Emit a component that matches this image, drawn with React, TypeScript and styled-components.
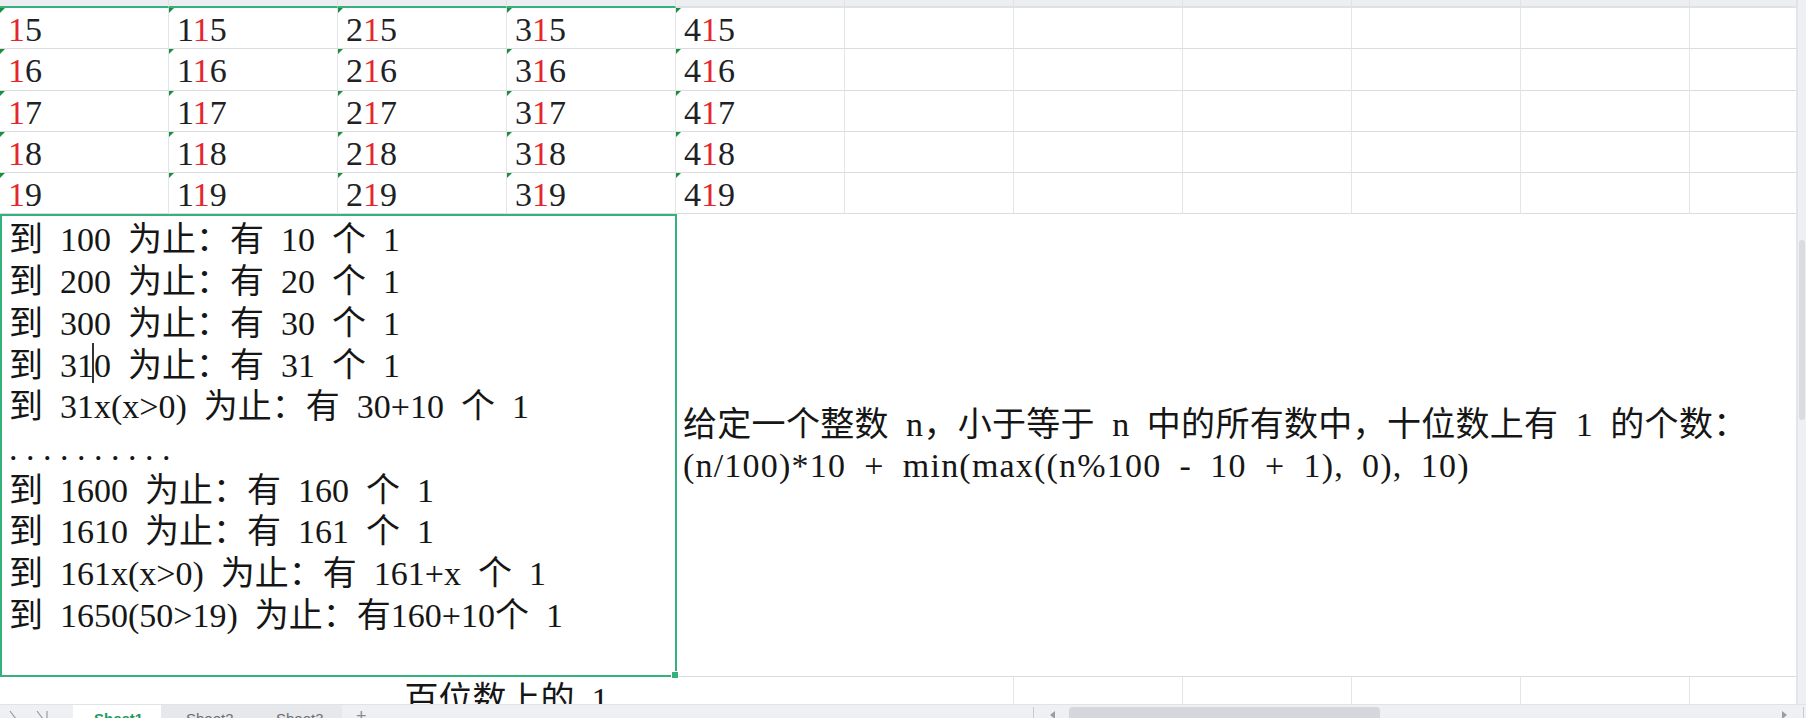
import React from 'react';
import styled, { createGlobalStyle } from 'styled-components';

const GREEN = '#35b27b';
const GRID_H = '#dadce0';
const GRID_V = '#e3e5e9';
const CELL_FONT = `"Liberation Serif", "Noto Sans CJK SC", serif`;

const GlobalStyle = createGlobalStyle`
  html, body {
    margin: 0;
    padding: 0;
    background: #fff;
    overflow: hidden;
  }
`;

const Window = styled.div`
  width: 1806px;
  height: 718px;
  display: flex;
  flex-direction: column;
  overflow: hidden;
  background: #fff;
`;

const Workspace = styled.div`
  display: flex;
  flex: 1;
  min-height: 0;
`;

const Sheet = styled.div`
  width: 1797px;
  display: flex;
  flex-direction: column;
  overflow: hidden;
`;

const ColumnGrid = styled.div<{ $height: string }>`
  display: grid;
  grid-template-columns: repeat(10, 169px) 1fr;
  height: ${(p) => p.$height};
  flex-shrink: 0;
`;

const HeaderCell = styled.div<{ $selected?: boolean }>`
  box-sizing: border-box;
  background: #eceef1;
  border-right: 1px solid #e0e2e6;
  border-bottom: 2px solid ${(p) => (p.$selected ? GREEN : '#dfe1e5')};
`;

const Cell = styled.div<{ $flag?: boolean }>`
  position: relative;
  box-sizing: border-box;
  border-right: 1px solid ${GRID_V};
  border-bottom: 1px solid ${GRID_H};
  padding: 3px 0 0 8px;
  font-family: ${CELL_FONT};
  font-size: 34px;
  line-height: 38px;
  color: #202124;
  white-space: nowrap;
  overflow: hidden;

  &::before {
    content: '';
    display: ${(p) => (p.$flag ? 'block' : 'none')};
    position: absolute;
    top: 0;
    left: 0;
    border-top: 5px solid #1b8f3e;
    border-right: 5px solid transparent;
  }
`;

const Hit = styled.span`
  color: #e5262d;
`;

const Block = styled.div`
  display: flex;
  height: 462.5px;
  flex-shrink: 0;
`;

const NoteCell = styled.div`
  position: relative;
  width: 677px;
  flex-shrink: 0;
  box-sizing: border-box;
  border: 2px solid ${GREEN};
  padding: 3px 0 0 7px;
  font-family: ${CELL_FONT};
  font-size: 34px;
  line-height: 41.7px;
  word-spacing: 0.25em;
  color: #161616;
  white-space: pre;
  z-index: 1;
`;

const Dots = styled.div`
  letter-spacing: 0.25em;
`;

const Handle = styled.span`
  position: absolute;
  right: -4px;
  bottom: -4px;
  width: 6px;
  height: 6px;
  background: ${GREEN};
  border: 1px solid #fff;
`;

const Caret = styled.span`
  position: absolute;
  left: 90px;
  top: 127px;
  width: 2px;
  height: 40px;
  background: #333;
`;

const FormulaCell = styled.div`
  flex: 1;
  box-sizing: border-box;
  display: flex;
  flex-direction: column;
  justify-content: center;
  padding-left: 6px;
  border-right: 1px solid ${GRID_V};
  border-bottom: 1px solid ${GRID_H};
  font-family: ${CELL_FONT};
  font-size: 34px;
  line-height: 41.7px;
  word-spacing: 0.25em;
  color: #161616;
  white-space: pre;
`;

const FormulaLine = styled.div<{ $track?: number }>`
  letter-spacing: ${(p) => p.$track ?? 0}px;
`;

const TitleCell = styled(Cell)`
  grid-column: span 6;
  text-align: center;
  padding: 2px 0 0;
  line-height: 41.7px;
  word-spacing: 0.25em;
  border-bottom: none;
  color: #161616;
`;

const PlainCell = styled(Cell)`
  border-bottom: none;
`;

const VScroll = styled.div`
  width: 9px;
  box-sizing: border-box;
  background: #eef0f3;
  border-left: 1px solid #e2e4e8;
  padding-top: 240px;
`;

const VThumb = styled.div`
  width: 6px;
  height: 180px;
  margin-left: 1px;
  border-radius: 3px;
  background: #d9dbe0;
`;

const TabBar = styled.div`
  height: 14px;
  display: flex;
  box-sizing: border-box;
  border-top: 1px solid #e1e3e7;
  background: #eef0f3;
  overflow: hidden;
  font-family: "Liberation Sans", Arial, sans-serif;
  font-size: 15px;
  line-height: 15px;
`;

const NavArrows = styled.div`
  width: 73px;
  display: flex;
  align-items: flex-start;
`;

const Tab = styled.div<{ $active?: boolean; $width: number }>`
  width: ${(p) => p.$width}px;
  box-sizing: border-box;
  padding: 6px 0 0 ${(p) => (p.$active ? 21 : 25)}px;
  background: ${(p) => (p.$active ? '#ffffff' : '#e6e8ec')};
  color: ${(p) => (p.$active ? '#1e9b5a' : '#6b6e74')};
  font-weight: ${(p) => (p.$active ? 700 : 400)};
  white-space: nowrap;
`;

const AddTab = styled.div`
  width: 40px;
  padding: 4px 0 0 14px;
  color: #8a8d92;
  font-size: 18px;
`;

const Spacer = styled.div`
  flex: 1;
`;

const HScroll = styled.div`
  width: 775px;
  display: flex;
  align-items: flex-start;
  padding-top: 2px;
  box-sizing: border-box;
`;

const Divider = styled.span`
  width: 1px;
  height: 14px;
  margin: 0 2px;
  background: #c9cbd0;
`;

const HThumb = styled.div`
  width: 311px;
  height: 14px;
  border-radius: 4px;
  background: #d5d7dc;
`;

const HArrow = styled.span<{ $gap: number }>`
  width: 0;
  height: 0;
  margin: 4px ${(p) => p.$gap}px 0;
  border-top: 4px solid transparent;
  border-bottom: 4px solid transparent;
  border-right: 5px solid #9a9ca1;
`;

const HArrowRight = styled(HArrow)`
  border-right: none;
  border-left: 5px solid #9a9ca1;
`;

const rows = [5, 6, 7, 8, 9];
const hundreds = ['', '1', '2', '3', '4'];

const noteLines = [
  '到 100 为止：有 10 个 1',
  '到 200 为止：有 20 个 1',
  '到 300 为止：有 30 个 1',
  '到 310 为止：有 31 个 1',
  '到 31x(x>0) 为止：有 30+10 个 1',
];

const noteLinesAfter = [
  '到 1600 为止：有 160 个 1',
  '到 1610 为止：有 161 个 1',
  '到 161x(x>0) 为止：有 161+x 个 1',
  '到 1650(50>19) 为止：有160+10个 1',
];

const App = () => {
  return (
    <Window>
      <GlobalStyle />
      <Workspace>
        <Sheet>
          <ColumnGrid $height="8px">
            {Array.from({ length: 11 }).map((_, i) => (
              <HeaderCell key={i} $selected={i < 4} />
            ))}
          </ColumnGrid>

          {rows.map((d) => (
            <ColumnGrid key={d} $height="41.3px">
              {Array.from({ length: 11 }).map((_, c) =>
                c < 5 ? (
                  <Cell key={c} $flag>
                    {hundreds[c]}
                    <Hit>1</Hit>
                    {d}
                  </Cell>
                ) : (
                  <Cell key={c} />
                )
              )}
            </ColumnGrid>
          ))}

          <Block>
            <NoteCell>
              {noteLines.map((l) => (
                <div key={l}>{l}</div>
              ))}
              <Dots>..........</Dots>
              {noteLinesAfter.map((l) => (
                <div key={l}>{l}</div>
              ))}
              <Caret />
              <Handle />
            </NoteCell>
            <FormulaCell>
              <FormulaLine $track={0.3}>给定一个整数 n，小于等于 n 中的所有数中，十位数上有 1 的个数：</FormulaLine>
              <FormulaLine $track={1.2}>(n/100)*10 + min(max((n%100 - 10 + 1), 0), 10)</FormulaLine>
            </FormulaCell>
          </Block>

          <ColumnGrid $height="27px">
            <TitleCell>百位数上的 1</TitleCell>
            {Array.from({ length: 5 }).map((_, i) => (
              <PlainCell key={i} />
            ))}
          </ColumnGrid>
        </Sheet>
        <VScroll>
          <VThumb />
        </VScroll>
      </Workspace>

      <TabBar>
        <NavArrows>
          <svg width="60" height="14" viewBox="0 0 60 14">
            <path d="M10 6 L16 14" stroke="#9a9ca1" strokeWidth="1.2" fill="none" />
            <path d="M37 6 L43 14 M47 6 L47 14" stroke="#9a9ca1" strokeWidth="1.2" fill="none" />
          </svg>
        </NavArrows>
        <Tab $active $width={88}>Sheet1</Tab>
        <Tab $width={90}>Sheet2</Tab>
        <Tab $width={91}>Sheet3</Tab>
        <AddTab>+</AddTab>
        <Spacer />
        <HScroll>
          <Divider />
          <HArrow $gap={14} />
          <HThumb />
          <Spacer />
          <HArrowRight $gap={14} />
          <Divider />
        </HScroll>
      </TabBar>
    </Window>
  );
};

export default App;
